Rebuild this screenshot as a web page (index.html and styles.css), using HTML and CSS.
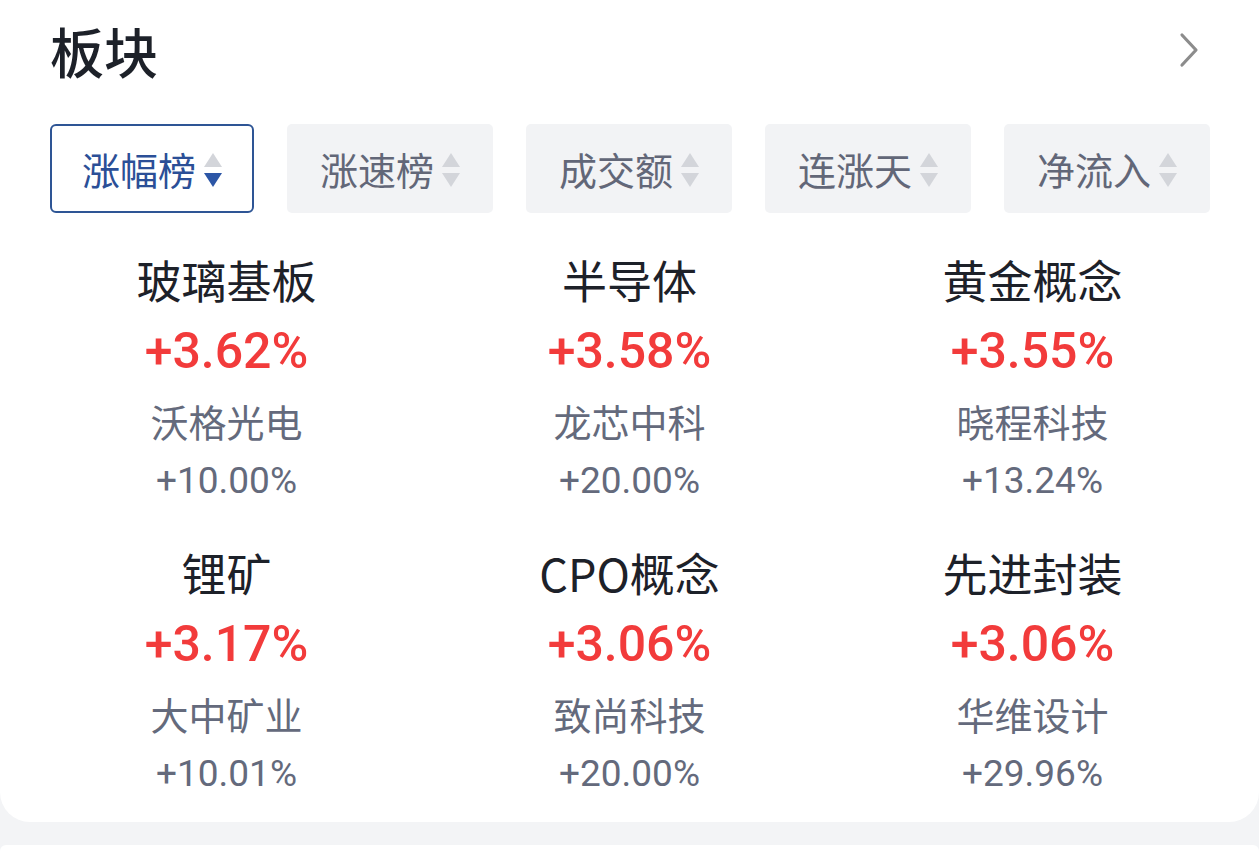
FILE: index.html
```html
<!DOCTYPE html>
<html lang="zh-CN">
<head>
<meta charset="utf-8">
<title>板块</title>
<link rel="stylesheet" href="styles.css">
</head>
<body>
<section class="card">
  <header class="head">
    <h1 class="title">板块</h1>
    <svg class="chev" width="22" height="36" viewBox="0 0 22 36"><path d="M4 3 L18 18 L4 33" fill="none" stroke="#8c8c8c" stroke-width="3.2" stroke-linecap="round" stroke-linejoin="round"/></svg>
  </header>
  <nav class="tabs">
    <div class="tab active"><span>涨幅榜</span><i class="sort"><b class="up"></b><b class="down"></b></i></div>
    <div class="tab"><span>涨速榜</span><i class="sort"><b class="up"></b><b class="down"></b></i></div>
    <div class="tab"><span>成交额</span><i class="sort"><b class="up"></b><b class="down"></b></i></div>
    <div class="tab"><span>连涨天</span><i class="sort"><b class="up"></b><b class="down"></b></i></div>
    <div class="tab"><span>净流入</span><i class="sort"><b class="up"></b><b class="down"></b></i></div>
  </nav>
  <div class="grid">
    <div class="cell"><div class="name">玻璃基板</div><div class="pct">+3.62%</div><div class="stock">沃格光电</div><div class="spct">+10.00%</div></div>
    <div class="cell"><div class="name">半导体</div><div class="pct">+3.58%</div><div class="stock">龙芯中科</div><div class="spct">+20.00%</div></div>
    <div class="cell"><div class="name">黄金概念</div><div class="pct">+3.55%</div><div class="stock">晓程科技</div><div class="spct">+13.24%</div></div>
    <div class="cell"><div class="name">锂矿</div><div class="pct">+3.17%</div><div class="stock">大中矿业</div><div class="spct">+10.01%</div></div>
    <div class="cell"><div class="name">CPO概念</div><div class="pct">+3.06%</div><div class="stock">致尚科技</div><div class="spct">+20.00%</div></div>
    <div class="cell"><div class="name">先进封装</div><div class="pct">+3.06%</div><div class="stock">华维设计</div><div class="spct">+29.96%</div></div>
  </div>
</section>
<section class="card next"></section>
</body>
</html>
```
FILE: styles.css
```css
html, body {
  margin: 0;
  padding: 0;
  background: #f3f4f6;
  font-family: "Roboto", "Noto Sans CJK SC", sans-serif;
}

.card {
  background: #ffffff;
  border-radius: 0 0 30px 30px;
  padding: 21px 48px 24px 50px;
}

.card.next {
  margin-top: 23px;
  border-radius: 30px 30px 0 0;
  height: 6px;
  padding: 0;
}

.head {
  display: flex;
  align-items: center;
  justify-content: space-between;
  height: 60px;
}

.title {
  margin: 0;
  font-family: "Noto Sans CJK SC", sans-serif;
  font-size: 54px;
  font-weight: 500;
  line-height: 60px;
  color: #1d2129;
}

.chev {
  margin-right: 11px;
  margin-top: -2px;
}

.tabs {
  display: flex;
  gap: 33px;
  margin-top: 43px;
}

.tab {
  flex: 0 0 206px;
  height: 89px;
  box-sizing: border-box;
  background: #f2f3f5;
  border-radius: 5px;
  display: flex;
  align-items: center;
  justify-content: center;
  gap: 8px;
  font-family: "Noto Sans CJK SC", sans-serif;
  font-size: 38px;
  color: #626778;
}

.tab span {
  line-height: 1;
}

.tab.active {
  flex-basis: 204px;
  background: #ffffff;
  border: 2px solid #2e5595;
  border-radius: 6px;
  color: #2b4f97;
}

.sort {
  display: flex;
  flex-direction: column;
  gap: 6px;
  margin-top: 2px;
}

.sort b {
  display: block;
  width: 0;
  height: 0;
  border-left: 9px solid transparent;
  border-right: 9px solid transparent;
}

.sort .up {
  border-bottom: 14px solid #d3d5da;
}

.sort .down {
  border-top: 14px solid #d3d5da;
}

.tab.active .sort .down {
  border-top-color: #2c56a6;
}

.grid {
  display: grid;
  grid-template-columns: repeat(3, 1fr);
  row-gap: 37px;
  margin: 36px -23px 0 -25px;
  text-align: center;
}

.name {
  font-family: "Noto Sans CJK SC", sans-serif;
  font-size: 45px;
  line-height: 62px;
  margin-bottom: 6px;
  color: #1d2129;
}

.pct {
  font-size: 50px;
  font-weight: 500;
  line-height: 68px;
  color: #f23b3b;
}

.stock {
  font-family: "Noto Sans CJK SC", sans-serif;
  font-size: 38px;
  line-height: 72px;
  color: #646a7c;
}

.spct {
  font-size: 37px;
  line-height: 48px;
  color: #646a7c;
}
```
